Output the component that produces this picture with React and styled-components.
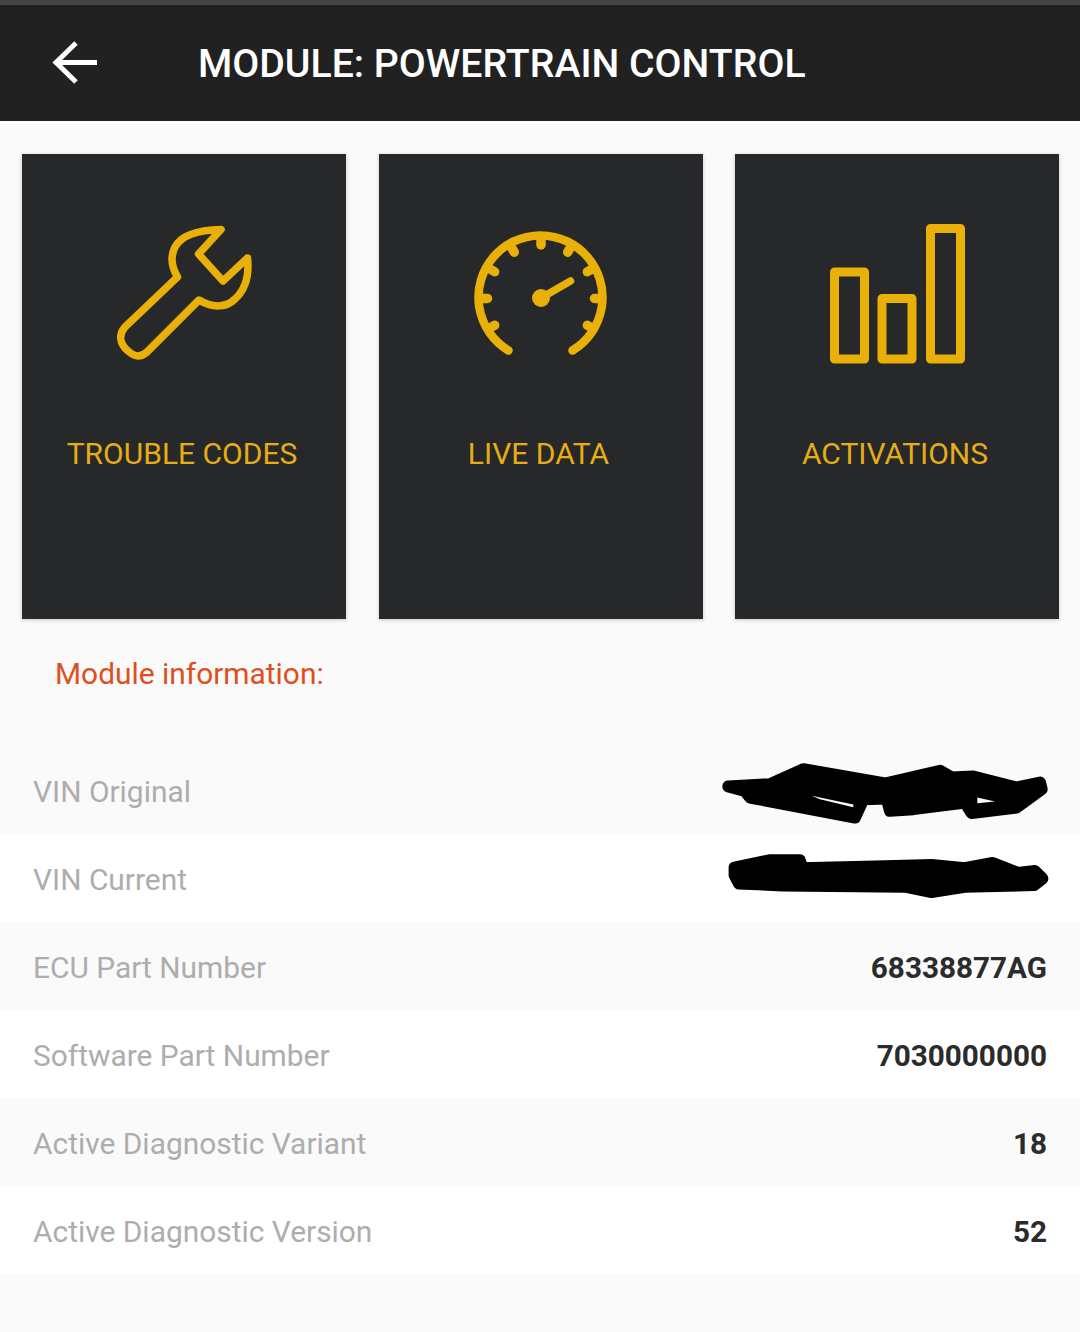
import styled, { createGlobalStyle } from 'styled-components';

const GlobalStyle = createGlobalStyle`
  html, body {
    margin: 0;
    padding: 0;
    background: #fafafa;
    font-family: Roboto, "Liberation Sans", sans-serif;
  }
`;

const Page = styled.div`
  width: 1080px;
  height: 1332px;
  overflow: hidden;
  background: #fafafa;
`;

const Header = styled.header`
  height: 116px;
  display: flex;
  align-items: center;
  background: #212121;
  border-top: 5px solid #454545;
  padding: 0 0 0 52px;
`;

const HeaderTitle = styled.h1`
  margin: 0 0 0 100px;
  color: #fff;
  font-size: 39.2px;
  font-weight: 500;
  line-height: 1;
  position: relative;
  top: 2px;
`;

const CardGrid = styled.div`
  display: grid;
  grid-template-columns: repeat(3, 1fr);
  gap: 32.5px;
  padding: 33px 21px 0 22px;
`;

const Card = styled.div`
  height: 465px;
  display: flex;
  flex-direction: column;
  align-items: center;
  background: #27282a;
  box-shadow: 0 1px 4px rgba(0, 0, 0, 0.2);
  color: #e9b007;
`;

const IconSvg = styled.svg`
  margin-top: 60px;
  display: block;
  fill: none;
  stroke: currentColor;
`;

const CardLabel = styled.div`
  margin: 62px 4px 0 0;
  font-size: 30px;
  line-height: 36px;
  color: #e6ad14;
`;

const SectionTitle = styled.h2`
  margin: 37px 0 55px 55px;
  height: 36px;
  color: #df4f1e;
  font-size: 29.9px;
  font-weight: 400;
  line-height: 36px;
`;

const Row = styled.div`
  height: 88px;
  display: flex;
  align-items: center;
  justify-content: space-between;
  padding: 0 33px;
  background: ${(p) => (p.$alt ? '#fff' : '#fafafa')};
`;

const RowLabel = styled.span`
  color: #adadad;
  font-size: 29.9px;
`;

const RowValue = styled.span`
  color: #2b2b2b;
  font-size: 29.7px;
  font-weight: 700;
`;

const Scribble = styled.svg`
  display: block;
  margin: ${(p) => p.$margin};
  fill: #000;
  stroke: #000;
  stroke-width: 36;
  stroke-linejoin: round;
`;

const ScribbleGap = styled.path`
  fill: #fafafa;
  stroke: none;
`;

function WrenchIcon() {
  return (
    <IconSvg width="160" height="160" viewBox="104 214 160 160" strokeWidth="7.5" strokeLinejoin="round">
      <path d="M221 229.5 C200 230 182 234 175 247 C170 257 171 266 177.5 277 L125 327 C118 335 120 344 128 351 C136 358 141 357 147 352 L199 300 C212 308 226 308 235 299 C247 288 249 272 247.5 258 L223 281 L198.5 254 Z" />
    </IconSvg>
  );
}

const TICK_ANGLES = [-120, -90, -60, -30, 0, 30, 60, 90, 120];

function GaugeIcon() {
  return (
    <IconSvg width="160" height="160" viewBox="461 214 160 160" strokeWidth="8.5" strokeLinecap="round">
      <path d="M508.5 350.5 A62 62 0 1 1 572.5 350.5" />
      {TICK_ANGLES.map((angle) => (
        <line key={angle} x1="541" y1="238" x2="541" y2="245" strokeWidth="9.5" transform={`rotate(${angle} 541 298.5)`} />
      ))}
      <line x1="541" y1="298" x2="570.5" y2="281" strokeWidth="7.5" />
      <circle cx="541" cy="298" r="9" fill="currentColor" stroke="none" />
    </IconSvg>
  );
}

function BarsIcon() {
  return (
    <IconSvg width="160" height="160" viewBox="817 214 160 160" strokeWidth="9" strokeLinejoin="round">
      <rect x="834.5" y="272" width="30" height="87" />
      <rect x="882" y="298.5" width="30" height="60.5" />
      <rect x="930.5" y="228.5" width="30" height="130.5" />
    </IconSvg>
  );
}

function BackArrow() {
  return (
    <svg width="46" height="44" viewBox="0 0 46 44" fill="none" stroke="#fff" strokeWidth="5">
      <path d="M45 21.5 H4" />
      <path d="M24 2 L4 21.5 L24 41" />
    </svg>
  );
}

const CARDS = [
  { label: 'TROUBLE CODES', Icon: WrenchIcon },
  { label: 'LIVE DATA', Icon: GaugeIcon },
  { label: 'ACTIVATIONS', Icon: BarsIcon },
];

const ROWS = [
  { label: 'ECU Part Number', value: '68338877AG' },
  { label: 'Software Part Number', value: '7030000000' },
  { label: 'Active Diagnostic Variant', value: '18' },
  { label: 'Active Diagnostic Version', value: '52' },
];

export default function App() {
  return (
    <Page>
      <GlobalStyle />
      <Header>
        <BackArrow />
        <HeaderTitle>MODULE: POWERTRAIN CONTROL</HeaderTitle>
      </Header>

      <CardGrid>
        {CARDS.map(({ label, Icon }) => (
          <Card key={label}>
            <Icon />
            <CardLabel>{label}</CardLabel>
          </Card>
        ))}
      </CardGrid>

      <SectionTitle>Module information:</SectionTitle>

      <Row>
        <RowLabel>VIN Original</RowLabel>
        <Scribble width="330" height="67" viewBox="60 60 990 200" $margin="3px -3px 0 0">
          <path d="M85 142 L210 135 L310 90 L555 133 L720 95 L755 115 L820 112 L950 145 L1020 130 L1025 150 L950 205 L815 222 L795 190 L640 210 L570 215 L560 178 L490 180 L465 235 L150 175 L135 155 Z" />
          <ScribbleGap d="M335 170 L460 196 L460 204 L360 180 Z" />
          <ScribbleGap d="M832 175 L885 187 L832 192 Z" />
        </Scribble>
      </Row>
      <Row $alt>
        <RowLabel>VIN Current</RowLabel>
        <Scribble width="327" height="48" viewBox="80 335 980 145" $margin="0 -5px 7px 0">
          <path d="M105 382 L210 360 L302 360 L310 384 L560 378 L700 374 L800 384 L885 368 L960 398 L1012 392 L1035 415 L1010 435 L800 440 L700 456 L620 440 L250 436 L118 430 L105 405 Z" />
        </Scribble>
      </Row>
      {ROWS.map((row, i) => (
        <Row key={row.label} $alt={i % 2 === 1}>
          <RowLabel>{row.label}</RowLabel>
          <RowValue>{row.value}</RowValue>
        </Row>
      ))}
    </Page>
  );
}
